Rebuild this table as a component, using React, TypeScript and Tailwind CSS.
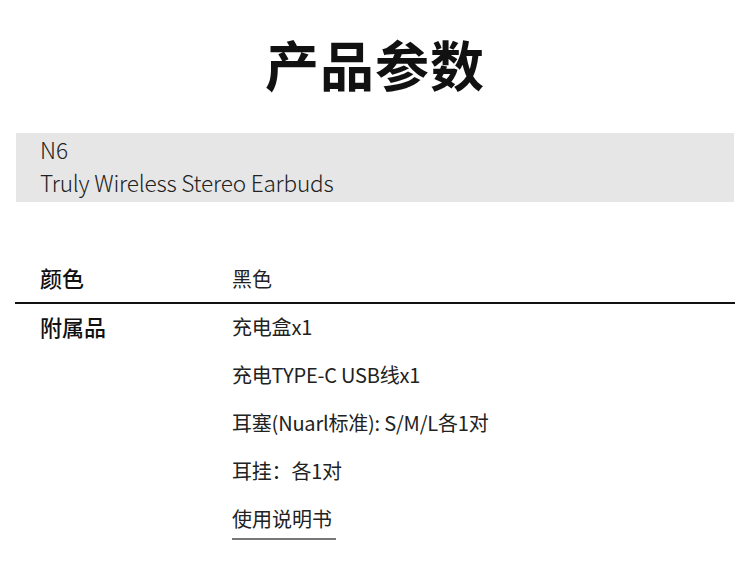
import React from 'react';

const ITEMS = ['充电盒x1', '充电TYPE-C USB线x1', '耳塞(Nuarl标准): S/M/L各1对', '耳挂：各1对'];

const App: React.FC = () => {
  return (
    <div className="w-[750px] h-[573px] bg-white text-[#111] overflow-hidden" style={{ fontFamily: '"Noto Sans CJK SC", "Noto Sans", sans-serif' }}>
      {/* Title */}
      <h1 className="pt-[28px] text-center text-[54px] leading-[72px] font-bold tracking-[1px]">产品参数</h1>

      {/* Model band */}
      <div className="mx-[16px] mt-[33px] h-[69px] bg-[#e6e6e6] pl-[24px] pt-0 font-light text-[22.6px] leading-[33px] text-[#222]">
        <div>N6</div>
        <div className="tracking-[-0.2px]">Truly Wireless Stereo Earbuds</div>
      </div>

      {/* Spec table */}
      <div className="mt-[61px] mx-[15px]">
        <div className="flex items-center h-[29px] pl-[25px]">
          <div className="w-[192px] text-[22px] font-medium">颜色</div>
          <div className="text-[20px] text-[#222] translate-y-[1px]">黑色</div>
        </div>
        <div className="mt-[10px] h-[2px] bg-[#111]" />
        <div className="flex pl-[25px] pt-[8px]">
          <div className="w-[192px] text-[22px] leading-[29px] font-medium">附属品</div>
          <div className="flex flex-col gap-[19px] text-[20px] leading-[29px] text-[#222] tracking-[-0.2px]">
            {ITEMS.map((t) => (
              <div key={t}>{t}</div>
            ))}
            <div className="self-start border-b-2 border-[#777] pb-[5px] pr-[4px] tracking-normal">使用说明书</div>
          </div>
        </div>
      </div>
    </div>
  );
};

export default App;
